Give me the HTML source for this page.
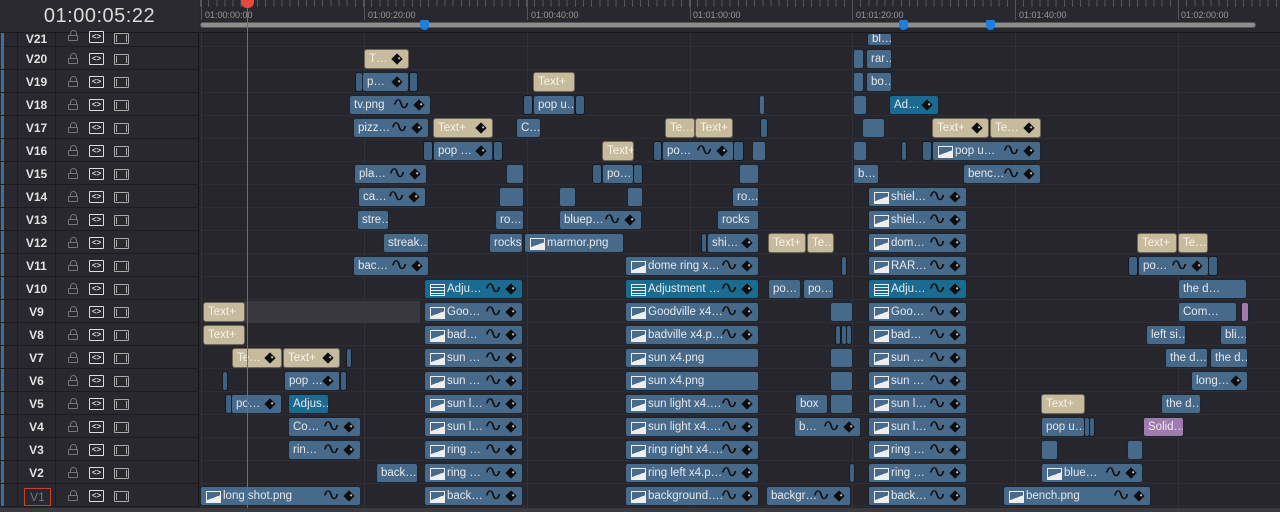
<!DOCTYPE html><html><head><meta charset="utf-8"><style>
*{margin:0;padding:0;box-sizing:border-box}
body{width:1280px;height:512px;background:#26262c;position:relative;overflow:hidden;font-family:"Liberation Sans",sans-serif}
#hdr{position:absolute;left:0;top:0;width:199px;height:512px;background:#28282e;border-right:1px solid #17171b}
#tc{position:absolute;left:0;top:0;width:199px;height:33px;background:#2a2a30;border-bottom:1px solid #18181c;color:#dcdcdc;font-size:20px;text-align:center;line-height:33px;letter-spacing:.5px}
.rh{position:absolute;left:0;width:199px;height:23px;border-bottom:1px solid #1c1c20}
.rh .s{position:absolute;left:1px;top:0;width:3px;height:22px;background:#3a6f9e}
.rh .v1{position:absolute;left:17px;top:0;width:1px;height:23px;background:#1c1c20}
.rh .v2{position:absolute;left:55px;top:0;width:1px;height:23px;background:#1c1c20}
.rh .l{position:absolute;left:18px;width:37px;top:1px;line-height:23px;text-align:center;color:#e2e2e2;font-size:12px;font-weight:bold}
.rh .lk{position:absolute;left:68px;top:11px;width:10px;height:6px;border:1.5px solid #777;border-radius:1px}
.rh .lk:before{content:"";position:absolute;left:1px;top:-6px;width:5px;height:5px;border:1.5px solid #777;border-bottom:none;border-radius:4px 4px 0 0}
.rh .bx{position:absolute;left:89px;top:6px;width:15px;height:12px;border:1.5px solid #ddd;border-radius:1px;color:#ddd;font-size:8px;line-height:9px;text-align:center;font-weight:bold}
.rh .fm{position:absolute;left:114px;top:7px;width:15px;height:11px;border:1.5px solid #aaa;border-radius:1px}
.rh .fm:before{content:"";position:absolute;left:1px;right:1px;top:1px;bottom:1px;border-left:1px solid #aaa;border-right:1px solid #aaa}
#ruler{position:absolute;left:200px;top:0;width:1080px;height:33px;background:#28282e;border-bottom:1px solid #18181c}
#ticks{position:absolute;left:0;top:0;width:1080px;height:7px;background:repeating-linear-gradient(90deg,#55555c 0 1px,transparent 1px 8.15px)}
.rl{position:absolute;top:10px;color:#9a9a9a;font-size:9px}
.rt{position:absolute;top:0;width:1px;height:20px;background:#55555c}
#sb{position:absolute;left:200px;top:22px;width:1056px;height:6px;background:#8e8e8e;border-radius:3px;border:1px solid #555}
.mk{position:absolute;top:20px;width:9px;height:10px;background:#1a7fe0;border-radius:2px 2px 5px 5px}
.row{position:absolute;left:200px;width:1080px;height:23px;border-bottom:1px solid #2e2e34}
.g{position:absolute;top:33px;width:1px;height:475px;background:#323239}
.c{position:absolute;top:2px;height:20px;border-radius:3px;background:#476a8b;border:1px solid #1c2632;color:#e4e8ec;font-size:11.5px;line-height:19px;padding-left:4px;overflow:hidden;white-space:nowrap}
.t{background:#c6bb9c;color:#f6f2e8;border-color:#6d6656}
.a{background:#1a6b8f}
.p{background:#a07cae;color:#f0e8f4}
.br{background:#3f6283;border-color:#141a22}
.i{padding-left:22px}
.i:before{content:"";position:absolute;left:5px;top:4px;width:13px;height:10px;border:1.5px solid #eee;background:linear-gradient(160deg,#476a8b 55%,#eee 55%)}
.a.i:before{background:repeating-linear-gradient(180deg,#1a6b8f 0 2px,#eee 2px 3px)}
.d{position:absolute;right:7px;top:5px;width:8px;height:8px;background:#0d0d0f;transform:rotate(45deg)}
.d:after{content:"";position:absolute;left:4px;top:1px;width:2px;height:2px;background:#bbb}
.w{position:absolute;right:22px;top:-1px;font-size:17px;color:#111;font-style:normal;font-family:"DejaVu Sans",sans-serif;transform:scaleX(1.35)}
#ph{position:absolute;left:247px;top:0;width:1px;height:512px;background:#d8433a}
#phh{position:absolute;left:241px;top:0;width:13px;height:8px;background:#e8483d;border-radius:0 0 6px 6px}
#bot{position:absolute;left:0;top:508px;width:1280px;height:4px;background:#3a3a40}
</style></head><body>
<div id="ruler"><div id="ticks"></div>
<div class="rt" style="left:1px"></div><div class="rt" style="left:164px"></div><div class="rt" style="left:327px"></div><div class="rt" style="left:490px"></div><div class="rt" style="left:652px"></div><div class="rt" style="left:815px"></div><div class="rt" style="left:978px"></div>
<div class="rl" style="left:5px">01:00:00:00</div><div class="rl" style="left:168px">01:00:20:00</div><div class="rl" style="left:331px">01:00:40:00</div><div class="rl" style="left:493px">01:01:00:00</div><div class="rl" style="left:656px">01:01:20:00</div><div class="rl" style="left:819px">01:01:40:00</div><div class="rl" style="left:981px">01:02:00:00</div>
</div>
<div id="sb"></div><div class="mk" style="left:420px"></div><div class="mk" style="left:899px"></div><div class="mk" style="left:986px"></div>
<div id="hdr"><div id="tc">01:00:05:22</div></div>
<div class="g" style="left:201px"></div><div class="g" style="left:364px"></div><div class="g" style="left:527px"></div><div class="g" style="left:690px"></div><div class="g" style="left:852px"></div><div class="g" style="left:1015px"></div><div class="g" style="left:1178px"></div>

<div class="row" style="top:24px"><div class="c" style="left:667px;width:25px;top:9px;height:13px;line-height:11px">bl…</div></div>
<div class="row" style="top:47px"><div class="c t" style="left:164px;width:45px">T…<i class="d"></i></div><div class="c" style="left:653px;width:11px"></div><div class="c" style="left:666px;width:26px">rar…</div></div>
<div class="row" style="top:70px"><div class="c br" style="left:155px;width:8px"></div><div class="c" style="left:162px;width:47px">p…<i class="d"></i></div><div class="c br" style="left:209px;width:9px"></div><div class="c t" style="left:333px;width:42px">Text+</div><div class="c" style="left:653px;width:11px"></div><div class="c" style="left:666px;width:26px">bo…</div></div>
<div class="row" style="top:93px"><div class="c" style="left:149px;width:82px">tv.png<i class="w">∿</i><i class="d"></i></div><div class="c br" style="left:323px;width:10px"></div><div class="c" style="left:333px;width:42px">pop u…</div><div class="c br" style="left:375px;width:10px"></div><div class="c" style="left:559px;width:2px"></div><div class="c" style="left:653px;width:14px"></div><div class="c a" style="left:689px;width:50px">Ad…<i class="d"></i></div></div>
<div class="row" style="top:116px"><div class="c" style="left:153px;width:76px">pizz…<i class="w">∿</i><i class="d"></i></div><div class="c t" style="left:233px;width:60px">Text+<i class="d"></i></div><div class="c" style="left:316px;width:25px">C…</div><div class="c t" style="left:465px;width:30px">Te…</div><div class="c t" style="left:495px;width:38px">Text+</div><div class="c br" style="left:560px;width:8px"></div><div class="c" style="left:662px;width:23px"></div><div class="c t" style="left:732px;width:57px">Text+<i class="d"></i></div><div class="c t" style="left:790px;width:51px">Te…<i class="d"></i></div></div>
<div class="row" style="top:139px"><div class="c br" style="left:223px;width:10px"></div><div class="c" style="left:233px;width:60px">pop …<i class="d"></i></div><div class="c br" style="left:293px;width:10px"></div><div class="c t" style="left:402px;width:32px">Text+</div><div class="c br" style="left:453px;width:9px"></div><div class="c" style="left:462px;width:72px">po…<i class="w">∿</i><i class="d"></i></div><div class="c br" style="left:533px;width:11px"></div><div class="c" style="left:552px;width:14px"></div><div class="c" style="left:653px;width:14px"></div><div class="c br" style="left:701px;width:6px"></div><div class="c br" style="left:722px;width:10px"></div><div class="c i" style="left:732px;width:109px">pop u…<i class="w">∿</i><i class="d"></i></div></div>
<div class="row" style="top:162px"><div class="c" style="left:154px;width:73px">pla…<i class="w">∿</i><i class="d"></i></div><div class="c" style="left:306px;width:18px"></div><div class="c br" style="left:392px;width:10px"></div><div class="c" style="left:402px;width:32px">po…</div><div class="c br" style="left:433px;width:10px"></div><div class="c" style="left:539px;width:20px"></div><div class="c" style="left:653px;width:26px">b…</div><div class="c" style="left:763px;width:78px">benc…<i class="w">∿</i><i class="d"></i></div></div>
<div class="row" style="top:185px"><div class="c" style="left:158px;width:68px">ca…<i class="w">∿</i><i class="d"></i></div><div class="c" style="left:299px;width:25px"></div><div class="c" style="left:359px;width:17px"></div><div class="c" style="left:427px;width:16px"></div><div class="c" style="left:532px;width:27px">ro…</div><div class="c i" style="left:668px;width:99px">shiel…<i class="w">∿</i><i class="d"></i></div></div>
<div class="row" style="top:208px"><div class="c" style="left:157px;width:32px">stre…</div><div class="c" style="left:295px;width:29px">ro…</div><div class="c" style="left:359px;width:83px">bluep…<i class="w">∿</i><i class="d"></i></div><div class="c" style="left:517px;width:42px">rocks</div><div class="c i" style="left:668px;width:99px">shiel…<i class="w">∿</i><i class="d"></i></div></div>
<div class="row" style="top:231px"><div class="c" style="left:183px;width:46px">streak…</div><div class="c" style="left:289px;width:34px">rocks</div><div class="c i" style="left:324px;width:100px">marmor.png</div><div class="c br" style="left:501px;width:6px"></div><div class="c" style="left:507px;width:52px">shi…<i class="d"></i></div><div class="c t" style="left:568px;width:38px">Text+</div><div class="c t" style="left:607px;width:27px">Te…</div><div class="c i" style="left:668px;width:99px">dom…<i class="w">∿</i><i class="d"></i></div><div class="c t" style="left:937px;width:40px">Text+</div><div class="c t" style="left:978px;width:30px">Te…</div></div>
<div class="row" style="top:254px"><div class="c" style="left:153px;width:76px">bac…<i class="w">∿</i><i class="d"></i></div><div class="c i" style="left:425px;width:134px">dome ring x…<i class="w">∿</i><i class="d"></i></div><div class="c br" style="left:641px;width:3px"></div><div class="c i" style="left:668px;width:99px">RAR…<i class="w">∿</i><i class="d"></i></div><div class="c br" style="left:928px;width:10px"></div><div class="c" style="left:938px;width:71px">po…<i class="w">∿</i><i class="d"></i></div><div class="c br" style="left:1008px;width:10px"></div></div>
<div class="row" style="top:277px"><div class="c a i" style="left:224px;width:99px">Adju…<i class="w">∿</i><i class="d"></i></div><div class="c a i" style="left:425px;width:134px">Adjustment …<i class="w">∿</i><i class="d"></i></div><div class="c" style="left:568px;width:33px">po…</div><div class="c" style="left:603px;width:31px">po…</div><div class="c a i" style="left:668px;width:99px">Adju…<i class="w">∿</i><i class="d"></i></div><div class="c" style="left:978px;width:69px">the d…</div></div>
<div class="row" style="top:300px"><div style="position:absolute;left:44px;top:1px;width:176px;height:22px;background:#38383e"></div><div class="c t" style="left:3px;width:42px">Text+</div><div class="c i" style="left:224px;width:99px">Goo…<i class="w">∿</i><i class="d"></i></div><div class="c i" style="left:425px;width:134px">Goodville x4…<i class="w">∿</i><i class="d"></i></div><div class="c" style="left:630px;width:23px"></div><div class="c i" style="left:668px;width:99px">Goo…<i class="w">∿</i><i class="d"></i></div><div class="c" style="left:978px;width:59px">Com…</div><div class="c p" style="left:1041px;width:8px"></div></div>
<div class="row" style="top:323px"><div class="c t" style="left:3px;width:42px">Text+</div><div class="c i" style="left:224px;width:99px">bad…<i class="w">∿</i><i class="d"></i></div><div class="c i" style="left:425px;width:134px">badville x4.p…<i class="w">∿</i><i class="d"></i></div><div class="c br" style="left:635px;width:6px"></div><div class="c br" style="left:641px;width:6px"></div><div class="c br" style="left:646px;width:6px"></div><div class="c i" style="left:668px;width:99px">bad…<i class="w">∿</i><i class="d"></i></div><div class="c" style="left:946px;width:40px">left si…</div><div class="c" style="left:1020px;width:27px">bli…</div></div>
<div class="row" style="top:346px"><div class="c t" style="left:32px;width:50px">Te…<i class="d"></i></div><div class="c t" style="left:83px;width:57px">Text+<i class="d"></i></div><div class="c br" style="left:146px;width:4px"></div><div class="c i" style="left:224px;width:99px">sun …<i class="w">∿</i><i class="d"></i></div><div class="c i" style="left:425px;width:134px">sun x4.png</div><div class="c" style="left:630px;width:23px"></div><div class="c i" style="left:668px;width:99px">sun …<i class="w">∿</i><i class="d"></i></div><div class="c" style="left:965px;width:43px">the d…</div><div class="c" style="left:1010px;width:38px">the d…</div></div>
<div class="row" style="top:369px"><div class="c br" style="left:22px;width:3px"></div><div class="c" style="left:84px;width:56px">pop …<i class="d"></i></div><div class="c br" style="left:140px;width:7px"></div><div class="c i" style="left:224px;width:99px">sun …<i class="w">∿</i><i class="d"></i></div><div class="c i" style="left:425px;width:134px">sun x4.png</div><div class="c" style="left:630px;width:23px"></div><div class="c i" style="left:668px;width:99px">sun …<i class="w">∿</i><i class="d"></i></div><div class="c" style="left:991px;width:57px">long…<i class="d"></i></div></div>
<div class="row" style="top:392px"><div class="c br" style="left:25px;width:7px"></div><div class="c" style="left:31px;width:51px">po…<i class="d"></i></div><div class="c a" style="left:88px;width:41px">Adjus…</div><div class="c i" style="left:224px;width:99px">sun l…<i class="w">∿</i><i class="d"></i></div><div class="c i" style="left:425px;width:134px">sun light x4….<i class="w">∿</i><i class="d"></i></div><div class="c" style="left:595px;width:33px">box</div><div class="c" style="left:630px;width:23px"></div><div class="c i" style="left:668px;width:99px">sun l…<i class="w">∿</i><i class="d"></i></div><div class="c t" style="left:841px;width:44px">Text+</div><div class="c" style="left:961px;width:40px">the d…</div></div>
<div class="row" style="top:415px"><div class="c" style="left:88px;width:73px">Co…<i class="w">∿</i><i class="d"></i></div><div class="c i" style="left:224px;width:99px">sun l…<i class="w">∿</i><i class="d"></i></div><div class="c i" style="left:425px;width:134px">sun light x4….<i class="w">∿</i><i class="d"></i></div><div class="c" style="left:594px;width:67px">b…<i class="w">∿</i><i class="d"></i></div><div class="c i" style="left:668px;width:99px">sun l…<i class="w">∿</i><i class="d"></i></div><div class="c" style="left:841px;width:44px">pop u…</div><div class="c br" style="left:884px;width:6px"></div><div class="c br" style="left:889px;width:6px"></div><div class="c p" style="left:943px;width:41px">Solid…</div></div>
<div class="row" style="top:438px"><div class="c" style="left:88px;width:73px">rin…<i class="w">∿</i><i class="d"></i></div><div class="c i" style="left:224px;width:99px">ring …<i class="w">∿</i><i class="d"></i></div><div class="c i" style="left:425px;width:134px">ring right x4….<i class="w">∿</i><i class="d"></i></div><div class="c i" style="left:668px;width:99px">ring …<i class="w">∿</i><i class="d"></i></div><div class="c" style="left:841px;width:17px"></div><div class="c" style="left:927px;width:16px"></div></div>
<div class="row" style="top:461px"><div class="c" style="left:176px;width:42px">back…</div><div class="c i" style="left:224px;width:99px">ring …<i class="w">∿</i><i class="d"></i></div><div class="c i" style="left:425px;width:134px">ring left x4.p…<i class="w">∿</i><i class="d"></i></div><div class="c br" style="left:649px;width:3px"></div><div class="c i" style="left:668px;width:99px">ring …<i class="w">∿</i><i class="d"></i></div><div class="c i" style="left:841px;width:102px">blue…<i class="w">∿</i><i class="d"></i></div></div>
<div class="row" style="top:484px"><div class="c i" style="left:0px;width:161px">long shot.png<i class="w">∿</i><i class="d"></i></div><div class="c i" style="left:224px;width:99px">back…<i class="w">∿</i><i class="d"></i></div><div class="c i" style="left:425px;width:134px">background….<i class="w">∿</i><i class="d"></i></div><div class="c" style="left:566px;width:85px">backgr…<i class="w">∿</i><i class="d"></i></div><div class="c i" style="left:668px;width:99px">back…<i class="w">∿</i><i class="d"></i></div><div class="c i" style="left:803px;width:148px">bench.png<i class="w">∿</i><i class="d"></i></div></div>

<div class="rh" style="top:33px;height:14px"><div class="s" style="height:14px"></div><div class="v1"></div><div class="v2"></div><div class="l" style="top:-5px">V21</div><div class="lk" style="top:2px"></div><div class="bx" style="top:-2px">&lt;&gt;</div><div class="fm" style="top:0"></div></div>
<div class="rh" style="top:47px"><div class="s"></div><div class="v1"></div><div class="v2"></div><div class="l">V20</div><div class="lk"></div><div class="bx">&lt;&gt;</div><div class="fm"></div></div>
<div class="rh" style="top:70px"><div class="s"></div><div class="v1"></div><div class="v2"></div><div class="l">V19</div><div class="lk"></div><div class="bx">&lt;&gt;</div><div class="fm"></div></div>
<div class="rh" style="top:93px"><div class="s"></div><div class="v1"></div><div class="v2"></div><div class="l">V18</div><div class="lk"></div><div class="bx">&lt;&gt;</div><div class="fm"></div></div>
<div class="rh" style="top:116px"><div class="s"></div><div class="v1"></div><div class="v2"></div><div class="l">V17</div><div class="lk"></div><div class="bx">&lt;&gt;</div><div class="fm"></div></div>
<div class="rh" style="top:139px"><div class="s"></div><div class="v1"></div><div class="v2"></div><div class="l">V16</div><div class="lk"></div><div class="bx">&lt;&gt;</div><div class="fm"></div></div>
<div class="rh" style="top:162px"><div class="s"></div><div class="v1"></div><div class="v2"></div><div class="l">V15</div><div class="lk"></div><div class="bx">&lt;&gt;</div><div class="fm"></div></div>
<div class="rh" style="top:185px"><div class="s"></div><div class="v1"></div><div class="v2"></div><div class="l">V14</div><div class="lk"></div><div class="bx">&lt;&gt;</div><div class="fm"></div></div>
<div class="rh" style="top:208px"><div class="s"></div><div class="v1"></div><div class="v2"></div><div class="l">V13</div><div class="lk"></div><div class="bx">&lt;&gt;</div><div class="fm"></div></div>
<div class="rh" style="top:231px"><div class="s"></div><div class="v1"></div><div class="v2"></div><div class="l">V12</div><div class="lk"></div><div class="bx">&lt;&gt;</div><div class="fm"></div></div>
<div class="rh" style="top:254px"><div class="s"></div><div class="v1"></div><div class="v2"></div><div class="l">V11</div><div class="lk"></div><div class="bx">&lt;&gt;</div><div class="fm"></div></div>
<div class="rh" style="top:277px"><div class="s"></div><div class="v1"></div><div class="v2"></div><div class="l">V10</div><div class="lk"></div><div class="bx">&lt;&gt;</div><div class="fm"></div></div>
<div class="rh" style="top:300px"><div class="s"></div><div class="v1"></div><div class="v2"></div><div class="l">V9</div><div class="lk"></div><div class="bx">&lt;&gt;</div><div class="fm"></div></div>
<div class="rh" style="top:323px"><div class="s"></div><div class="v1"></div><div class="v2"></div><div class="l">V8</div><div class="lk"></div><div class="bx">&lt;&gt;</div><div class="fm"></div></div>
<div class="rh" style="top:346px"><div class="s"></div><div class="v1"></div><div class="v2"></div><div class="l">V7</div><div class="lk"></div><div class="bx">&lt;&gt;</div><div class="fm"></div></div>
<div class="rh" style="top:369px"><div class="s"></div><div class="v1"></div><div class="v2"></div><div class="l">V6</div><div class="lk"></div><div class="bx">&lt;&gt;</div><div class="fm"></div></div>
<div class="rh" style="top:392px"><div class="s"></div><div class="v1"></div><div class="v2"></div><div class="l">V5</div><div class="lk"></div><div class="bx">&lt;&gt;</div><div class="fm"></div></div>
<div class="rh" style="top:415px"><div class="s"></div><div class="v1"></div><div class="v2"></div><div class="l">V4</div><div class="lk"></div><div class="bx">&lt;&gt;</div><div class="fm"></div></div>
<div class="rh" style="top:438px"><div class="s"></div><div class="v1"></div><div class="v2"></div><div class="l">V3</div><div class="lk"></div><div class="bx">&lt;&gt;</div><div class="fm"></div></div>
<div class="rh" style="top:461px"><div class="s"></div><div class="v1"></div><div class="v2"></div><div class="l">V2</div><div class="lk"></div><div class="bx">&lt;&gt;</div><div class="fm"></div></div>
<div class="rh" style="top:484px"><div class="s"></div><div class="v1"></div><div class="v2"></div><div class="l" style="left:24px;width:27px;top:4px;height:18px;line-height:16px;border:1px solid #c8402f;color:#777;font-weight:normal">V1</div><div class="lk"></div><div class="bx">&lt;&gt;</div><div class="fm"></div></div>

<div id="ph"></div><div id="phh"></div>
<div id="bot"></div>
</body></html>
